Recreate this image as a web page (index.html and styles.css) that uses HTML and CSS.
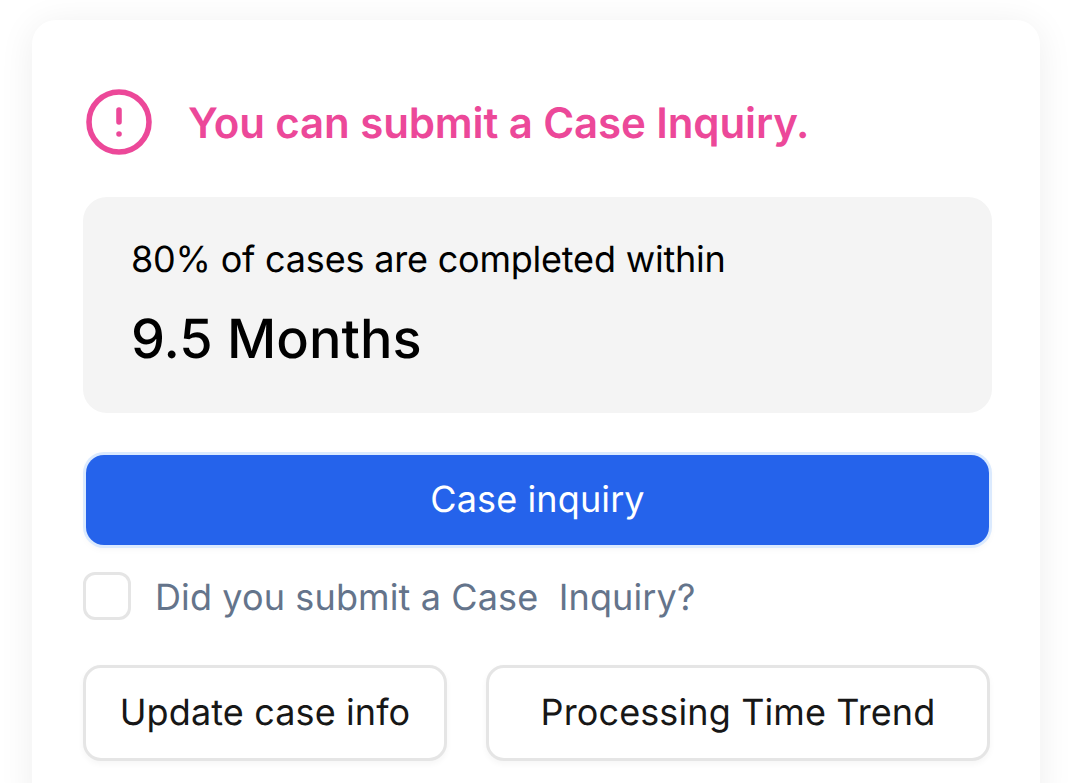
FILE: index.html
```html
<!DOCTYPE html>
<html lang="en">
<head>
  <meta charset="UTF-8">
  <title>Case Inquiry</title>
  <link rel="stylesheet" href="styles.css">
</head>
<body>
  <div class="card">
    <div class="alert">
      <svg class="alert-icon" width="72" height="72" viewBox="0 0 24 24" fill="none" stroke="#ec4899" stroke-width="1.85" stroke-linecap="round" stroke-linejoin="round">
        <circle cx="12" cy="12" r="10"/>
        <line x1="12" y1="8" x2="12" y2="12"/>
        <line x1="12" y1="16" x2="12.01" y2="16"/>
      </svg>
      <h2>You can submit a Case Inquiry.</h2>
    </div>

    <div class="stat">
      <p class="stat-label">80% of cases are completed within</p>
      <p class="stat-value">9.5 Months</p>
    </div>

    <button class="primary">Case inquiry</button>

    <label class="check">
      <span class="box"></span>
      <span class="check-text">Did you submit a Case &nbsp;Inquiry?</span>
    </label>

    <div class="actions">
      <button class="secondary update">Update case info</button>
      <button class="secondary trend">Processing Time Trend</button>
    </div>
  </div>
</body>
</html>
```

FILE: styles.css
```css
html, body {
  height: 100%;
  overflow: hidden;
}
body {
  font-family: Inter, "Liberation Sans", sans-serif;
  text-rendering: geometricPrecision;
  background: #fff;
  margin: 0;
  padding: 20px 28px 0 32px;
  box-sizing: border-box;
}
.card {
  background: #fff;
  border-radius: 24px;
  box-shadow: 0 4px 36px rgba(0, 0, 0, 0.07);
  padding: 66px 48px 48px 51px;
  min-height: 800px;
  box-sizing: border-box;
}
.alert {
  display: flex;
  align-items: center;
  gap: 33px;
}
.alert-icon {
  flex: none;
}
h2 {
  margin: 0;
  padding-top: 4px;
  font-size: 42px;
  font-weight: 600;
  letter-spacing: -0.1px;
  line-height: 68px;
  color: #ec4899;
}
.stat {
  background: #f4f4f4;
  border-radius: 24px;
  margin-top: 39px;
  height: 216px;
  padding: 35px 48px 0;
  box-sizing: border-box;
}
.stat p {
  margin: 0;
  color: #000;
}
.stat-label {
  font-size: 36px;
  letter-spacing: -0.2px;
  line-height: 54px;
}
.stat .stat-value {
  font-size: 54px;
  font-weight: 500;
  line-height: 72px;
  margin-top: 18px;
}
button {
  font-family: inherit;
  text-rendering: inherit;
  font-size: 36px;
  letter-spacing: 0.12px;
  cursor: pointer;
}
.primary {
  display: block;
  width: 903px;
  height: 90px;
  margin: 42px 0 0 3px;
  padding-bottom: 3px;
  background: #2563eb;
  color: #fff;
  border: none;
  border-radius: 18px;
  box-shadow: 0 0 0 3px #dbeafe, 0 3px 9px rgba(0, 0, 0, 0.05);
}
.check {
  display: flex;
  align-items: center;
  gap: 24px;
  margin-top: 27px;
  font-size: 36px;
  letter-spacing: 0.12px;
  line-height: 46px;
  color: #64748b;
}
.check-text {
  padding-top: 2px;
}
.box {
  width: 48px;
  height: 48px;
  border: 3px solid #e5e5e5;
  border-radius: 12px;
  box-sizing: border-box;
}
.actions {
  display: flex;
  gap: 39px;
  margin-top: 45px;
  margin-right: 2px;
}
.secondary {
  height: 96px;
  padding-bottom: 3px;
  background: #fff;
  color: #171717;
  border: 3px solid #e5e5e5;
  border-radius: 18px;
  box-shadow: 0 3px 6px rgba(0, 0, 0, 0.04);
}
.update {
  width: 364px;
}
.trend {
  width: 504px;
}
```
